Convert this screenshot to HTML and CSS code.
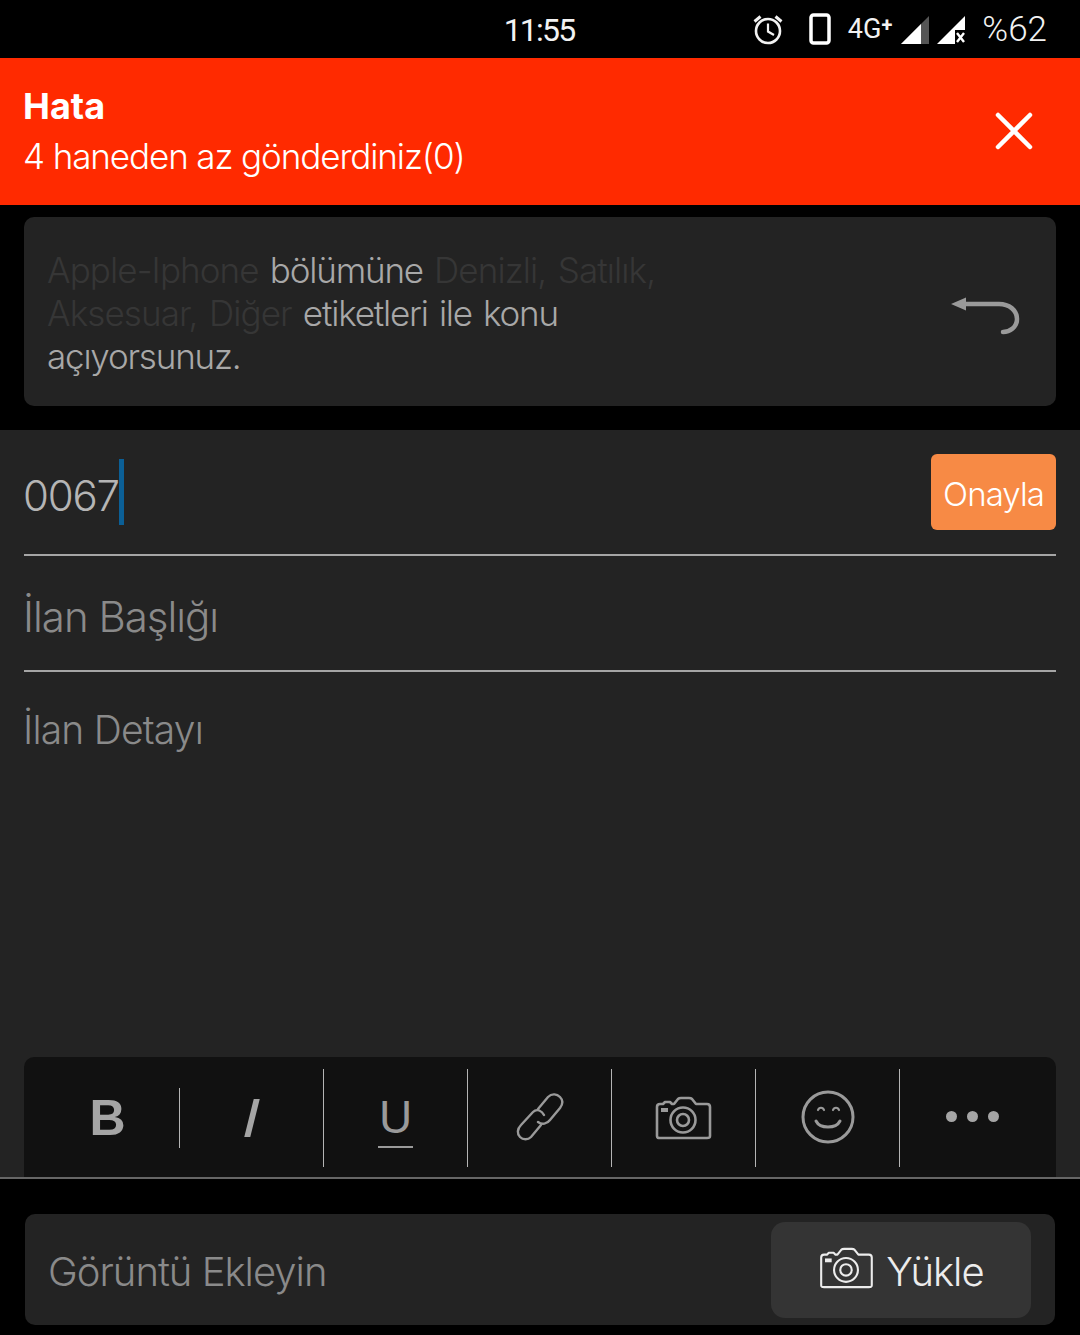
FILE: index.html
```html
<!DOCTYPE html>
<html lang="tr">
  <head>
    <meta charset="UTF-8" />
    <meta name="viewport" content="width=device-width, initial-scale=1.0" />
    <title>Yeni İlan</title>
    <link rel="stylesheet" href="styles.css">
  </head>
  <body>
    <div class="status-bar">
      <div></div>
      <div class="status-time">11:55</div>
      <div class="status-icons">
        <svg class="icon-alarm" width="34" height="34" viewBox="0 0 34 34">
          <circle cx="17" cy="19" r="12" fill="none" stroke="#f2f2f2" stroke-width="2.6" />
          <path d="M17 11.500V19.500L23 23" fill="none" stroke="#f2f2f2" stroke-width="2.2" />
          <path d="M3.500 9.500L9.500 4.500M30.500 9.500L24.500 4.500" fill="none" stroke="#f2f2f2" stroke-width="3" />
        </svg>
        <svg class="icon-phone" width="22" height="32" viewBox="0 0 22 32">
          <rect x="2" y="2" width="18" height="28" rx="2.500" fill="none" stroke="#fff" stroke-width="3.500" />
        </svg>
        <span class="status-net">4G<sup>+</sup></span>
        <svg class="icon-signal" width="28" height="28" viewBox="0 0 28 28">
          <path d="M0 28L28 0V28Z" fill="#555" />
          <path d="M0 28L20 8V28Z" fill="#fff" />
        </svg>
        <svg class="icon-signal-x" width="28" height="28" viewBox="0 0 28 28">
          <path d="M0 28L28 0V14H18V28Z" fill="#fff" />
          <path d="M20 17L27 26M27 17L20 26" stroke="#fff" stroke-width="2.400" />
        </svg>
        <span class="status-battery">%62</span>
      </div>
    </div>

    <div class="alert">
      <div class="alert-text">
        <h2>Hata</h2>
        <p>4 haneden az gönderdiniz(0)</p>
      </div>
      <svg class="alert-close" width="38" height="38" viewBox="0 0 38 38">
        <path d="M3 3L35 35M35 3L3 35" stroke="#fff" stroke-width="4.500" stroke-linecap="round" />
      </svg>
    </div>

    <div class="notice-wrap">
      <div class="notice">
        <p class="notice-text">
          <span class="tag">Apple-Iphone</span> bölümüne <span class="tag">Denizli, Satılık,</span><br />
          <span class="tag">Aksesuar, Diğer</span> etiketleri ile konu<br />
          açıyorsunuz.
        </p>
        <svg class="notice-back" width="70" height="40" viewBox="0 0 70 40">
          <path d="M1 8L16 1.500V14.500Z" fill="#9a9a9a" />
          <path d="M14 8H49C59 8 67 14 67 23C67 31 60 36 53 36" fill="none" stroke="#9a9a9a" stroke-width="4.500" stroke-linecap="round" />
        </svg>
      </div>
    </div>

    <div class="form">
      <div class="field field-code">
        <div class="code-value"><span class="code-digits">0067</span><span class="caret"></span></div>
        <button class="confirm-button">Onayla</button>
      </div>
      <div class="field field-title">İlan Başlığı</div>
      <div class="detail">İlan Detayı</div>

      <div class="toolbar">
        <div class="tool tool-short"><span class="tool-b">B</span></div>
        <div class="tool"><span class="tool-i"></span></div>
        <div class="tool"><span class="tool-u">U</span></div>
        <div class="tool">
          <svg width="50" height="50" viewBox="0 0 50 50" fill="none" stroke="#9a9a9a" stroke-width="2.400" stroke-linecap="round">
            <path d="M23 16L33 4C37 0 42 1 45 4C48 7 48 11 45 15L35 27C32 31 27 32 23 29" />
            <path d="M29 22C27 18 22 15 18 19L6 32C2 36 2 41 5 44C8 47 13 47 16 44L26 32" />
          </svg>
        </div>
        <div class="tool">
          <svg class="icon-tool-camera" width="58" height="44" viewBox="0 0 58 44" fill="none" stroke="#9a9a9a" stroke-width="2.600" stroke-linejoin="round">
            <path d="M3 11C3 9 4 8 6 8H9L11 6H16L18 8H20L24 3C25 2 26 2 27 2H35C36 2 37 2 38 3L42 8H53C55 8 56 9 56 11V40C56 42 55 42 53 42H6C4 42 3 42 3 40Z" />
            <circle cx="29" cy="24" r="12.500" />
            <circle cx="29" cy="24" r="6" />
            <rect x="7" y="12" width="7" height="4" fill="#9a9a9a" stroke="none" />
          </svg>
        </div>
        <div class="tool">
          <svg class="icon-smile" width="54" height="54" viewBox="0 0 54 54" fill="none" stroke="#9a9a9a" stroke-linecap="round">
            <circle cx="27" cy="27" r="25" stroke-width="3" />
            <path d="M17 20C18 17 22 17 23 20M32 20C33 17 37 17 38 20" stroke-width="2.200" />
            <path d="M15 31C19 39 35 39 39 31" stroke-width="3" />
          </svg>
        </div>
        <div class="tool tool-last">
          <span class="dot"></span><span class="dot"></span><span class="dot"></span>
        </div>
      </div>
    </div>

    <div class="upload-wrap">
      <div class="upload">
        <span class="upload-label">Görüntü Ekleyin</span>
        <button class="upload-button">
          <svg class="icon-camera" width="56" height="42" viewBox="0 0 58 44" fill="none" stroke="#ececec" stroke-width="2.200" stroke-linejoin="round">
            <path d="M3 11C3 9 4 8 6 8H9L11 6H16L18 8H20L24 3C25 2 26 2 27 2H35C36 2 37 2 38 3L42 8H53C55 8 56 9 56 11V40C56 42 55 42 53 42H6C4 42 3 42 3 40Z" />
            <circle cx="29" cy="24" r="12.500" />
            <circle cx="29" cy="24" r="6" />
            <rect x="7" y="12" width="7" height="4" fill="#ececec" stroke="none" />
          </svg>
          <span class="upload-text">Yükle</span>
        </button>
      </div>
    </div>
  </body>
</html>
```

FILE: styles.css
```css
* {
  box-sizing: border-box;
  margin: 0;
  padding: 0;
  font-family: "Inter", sans-serif;
}

body {
  background-color: #000;
  color: #fff;
  width: 1080px;
  height: 1335px;
  overflow: hidden;
}

.status-bar {
  height: 58px;
  display: grid;
  grid-template-columns: 1fr auto 1fr;
  align-items: center;
}

.status-time {
  padding-top: 1px;
  margin-left: -2px;
  font-size: 32px;
  letter-spacing: -1.8px;
  color: #f2f2f2;
  font-family: "Roboto", sans-serif;
}

.status-icons {
  display: flex;
  align-items: center;
  justify-content: flex-end;
  padding-right: 33px;
}

.icon-phone {
  margin-left: 24px;
}

.status-net {
  margin-left: 17px;
  font-size: 27px;
  color: #f2f2f2;
  font-family: "Roboto", sans-serif;
}

.status-net sup {
  font-size: 20px;
  font-weight: 700;
  line-height: 0;
  vertical-align: 6px;
  font-family: "Roboto", sans-serif;
}

.icon-signal {
  margin-left: 9px;
  margin-top: 2px;
}

.icon-signal-x {
  margin-left: 8px;
  margin-top: 2px;
}

.status-battery {
  margin-left: 17px;
  padding-top: 1px;
  font-size: 35px;
  color: #f2f2f2;
  font-family: "Roboto", sans-serif;
  font-weight: 300;
}

.alert {
  height: 147px;
  background-color: #ff2a00;
  display: flex;
  justify-content: space-between;
  align-items: center;
  padding: 0 47px 0 23px;
}

.alert h2 {
  font-size: 36px;
  font-weight: 700;
  line-height: 48px;
}

.alert p {
  font-size: 35px;
  line-height: 52px;
  font-weight: 300;
  letter-spacing: -1.1px;
}

.alert-close {
  margin-bottom: 2px;
}

.notice-wrap {
  padding: 12px 24px 24px;
}

.notice {
  height: 189px;
  background-color: #232323;
  border-radius: 10px;
  padding: 32px 36px 0 23px;
  display: flex;
  justify-content: space-between;
  align-items: flex-start;
}

.notice-text {
  font-size: 35px;
  line-height: 43px;
  font-weight: 300;
  letter-spacing: -1.2px;
  word-spacing: 2.5px;
  color: #a8a8a8;
}

.tag {
  color: #363636;
  letter-spacing: -0.9px;
}

.notice-back {
  margin-top: 47px;
}

.form {
  height: 749px;
  background-color: #232323;
  padding: 0 24px;
  display: flex;
  flex-direction: column;
  border-bottom: 2px solid #666;
}

.field {
  border-bottom: 2px solid #a5a5a5;
  display: flex;
  align-items: center;
  font-size: 42px;
  font-weight: 300;
  letter-spacing: -1px;
  color: #8a8a8a;
}

.field-code {
  height: 126px;
  justify-content: space-between;
}

.field-title {
  height: 116px;
  padding-top: 6px;
  text-indent: -1px;
}

.code-value {
  display: flex;
  align-items: center;
  color: #b5b5b5;
}

.code-digits {
  margin-left: -1px;
  padding-top: 6px;
  letter-spacing: -1.2px;
}

.caret {
  width: 5px;
  height: 66px;
  background-color: #0b5f96;
}

.confirm-button {
  width: 125px;
  height: 76px;
  padding-top: 3px;
  background-color: #f78a45;
  color: #fff;
  border: none;
  border-radius: 6px;
  font-size: 33px;
  font-weight: 300;
  letter-spacing: -0.9px;
}

.detail {
  flex: 1;
  padding-top: 34px;
  font-size: 39px;
  font-weight: 300;
  letter-spacing: -0.8px;
  text-indent: -1px;
  color: #8a8a8a;
}

.toolbar {
  height: 120px;
  background-color: #111;
  border-radius: 10px 10px 0 0;
  padding: 12px 0 10px 12px;
  display: flex;
}

.tool {
  width: 144px;
  display: flex;
  align-items: center;
  justify-content: center;
  border-right: 1px solid #b5b5b5;
  color: #9a9a9a;
}

.tool-short {
  height: 60px;
  margin-top: 19px;
}

.tool-last {
  border-right: none;
  gap: 10px;
  padding-bottom: 3px;
}

.icon-smile {
  margin-bottom: 2px;
}

.icon-tool-camera {
  margin-right: 2px;
}

.tool-b {
  font-size: 50px;
  font-weight: 700;
  color: #a5a5a5;
  font-family: "Liberation Sans", sans-serif;
}

.tool-i {
  width: 6px;
  height: 38px;
  background-color: #a5a5a5;
  transform: skewX(-14deg);
}

.tool-u {
  font-size: 46px;
  line-height: 46px;
  border-bottom: 2px solid #9a9a9a;
  padding: 0 1px 6px;
  margin-top: 6px;
  font-family: "Liberation Sans", sans-serif;
}

.dot {
  width: 11px;
  height: 11px;
  background-color: #a5a5a5;
  border-radius: 50%;
}

.upload-wrap {
  padding: 35px 25px 0;
}

.upload {
  height: 111px;
  background-color: #232323;
  border-radius: 10px;
  padding: 0 24px 0 23px;
  display: flex;
  align-items: center;
  justify-content: space-between;
}

.upload-label {
  padding-top: 4px;
  font-size: 40px;
  font-weight: 300;
  letter-spacing: -1px;
  color: #8a8a8a;
}

.upload-button {
  width: 260px;
  height: 96px;
  background-color: #343434;
  color: #ececec;
  border: none;
  border-radius: 14px;
  display: flex;
  align-items: center;
  justify-content: center;
  gap: 12px;
  font-size: 40px;
  font-weight: 300;
  letter-spacing: -1px;
}

.icon-camera {
  margin-bottom: 3px;
}

.upload-text {
  padding-top: 4px;
}
```
